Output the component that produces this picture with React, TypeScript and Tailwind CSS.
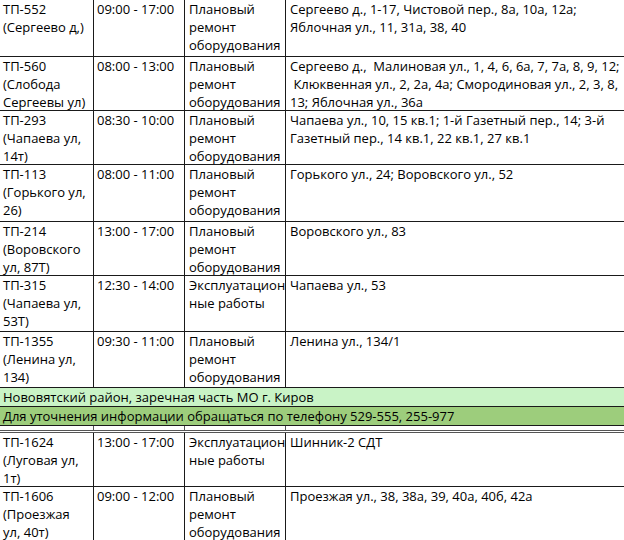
import React from 'react';

type Row = {
  tp: string[];
  time: string;
  work: string[];
  addr: string[];
  h: string;
};

const planned = ['Плановый', 'ремонт', 'оборудования'];
const exploit = ['Эксплуатацион', 'ные работы'];

const topRows: Row[] = [
  {
    tp: ['ТП-552', '(Сергеево д,)'],
    time: '09:00 - 17:00',
    work: planned,
    addr: ['Сергеево д., 1-17, Чистовой пер., 8а, 10а, 12а;', 'Яблочная ул., 11, 31а, 38, 40'],
    h: 'h-[57px]',
  },
  {
    tp: ['ТП-560', '(Слобода', 'Сергеевы ул)'],
    time: '08:00 - 13:00',
    work: planned,
    addr: [
      'Сергеево д.,  Малиновая ул., 1, 4, 6, 6а, 7, 7а, 8, 9, 12;',
      ' Клюквенная ул., 2, 2а, 4а; Смородиновая ул., 2, 3, 8,',
      '13; Яблочная ул., 36а',
    ],
    h: 'h-[54px]',
  },
  {
    tp: ['ТП-293', '(Чапаева ул,', '14т)'],
    time: '08:30 - 10:00',
    work: planned,
    addr: ['Чапаева ул., 10, 15 кв.1; 1-й Газетный пер., 14; 3-й', 'Газетный пер., 14 кв.1, 22 кв.1, 27 кв.1'],
    h: 'h-[54px]',
  },
  {
    tp: ['ТП-113', '(Горького ул,', '26)'],
    time: '08:00 - 11:00',
    work: planned,
    addr: ['Горького ул., 24; Воровского ул., 52'],
    h: 'h-[57px]',
  },
  {
    tp: ['ТП-214', '(Воровского', 'ул, 87Т)'],
    time: '13:00 - 17:00',
    work: planned,
    addr: ['Воровского ул., 83'],
    h: 'h-[54px]',
  },
  {
    tp: ['ТП-315', '(Чапаева ул,', '53Т)'],
    time: '12:30 - 14:00',
    work: exploit,
    addr: ['Чапаева ул., 53'],
    h: 'h-[56px]',
  },
  {
    tp: ['ТП-1355', '(Ленина ул,', '134)'],
    time: '09:30 - 11:00',
    work: planned,
    addr: ['Ленина ул., 134/1'],
    h: 'h-[56px]',
  },
];

const bottomRows: Row[] = [
  {
    tp: ['ТП-1624', '(Луговая ул,', '1т)'],
    time: '13:00 - 17:00',
    work: exploit,
    addr: ['Шинник-2 СДТ'],
    h: 'h-[54px]',
  },
  {
    tp: ['ТП-1606', '(Проезжая', 'ул, 40т)'],
    time: '09:00 - 12:00',
    work: planned,
    addr: ['Проезжая ул., 38, 38а, 39, 40а, 40б, 42а'],
    h: 'h-[54px]',
  },
];

const cols = 'grid grid-cols-[94px_91px_101px_1fr]';

const Lines = ({ items }: { items: string[] }) => (
  <>
    {items.map((t, i) => (
      <div key={i} className="whitespace-pre">
        {t}
      </div>
    ))}
  </>
);

const DataRow = ({ row, first }: { row: Row; first?: boolean }) => (
  <div className={`${cols} ${row.h} border-b border-[#1a1a1a] ${first ? '-mt-[2px] pt-[2px]' : ''}`}>
    <div className="border-r border-[#1a1a1a] pl-[3px]">
      <Lines items={row.tp} />
    </div>
    <div className="border-r border-[#1a1a1a] pl-[3px]">{row.time}</div>
    <div className="border-r border-[#1a1a1a] pl-[4px]">
      <Lines items={row.work} />
    </div>
    <div className="pl-[4px]">
      <Lines items={row.addr} />
    </div>
  </div>
);

export default function App() {
  return (
    <div
      className="w-[624px] h-[540px] overflow-hidden bg-white text-black text-[13px] leading-[18px]"
      style={{ fontFamily: '"Open Sans", "Noto Sans", sans-serif' }}
    >
      {topRows.map((r) => (
        <DataRow key={r.tp[0]} row={r} />
      ))}

      <div className="h-[19px] bg-[#c9f3c6] border-b border-[#1a1a1a] pl-[3px] whitespace-nowrap">
        Нововятский район, заречная часть МО г. Киров
      </div>
      <div className="h-[19px] bg-[#9dcd7c] border-b border-[#1a1a1a] pl-[3px] whitespace-nowrap">
        Для уточнения информации обращаться по телефону 529-555, 255-977
      </div>

      <div className={`${cols} h-[7px] border-b-[3px] border-double border-[#555]`}>
        <div className="border-r border-[#555]" />
        <div className="border-r border-[#555]" />
        <div className="border-r border-[#555]" />
        <div />
      </div>

      {bottomRows.map((r) => (
        <DataRow key={r.tp[0]} row={r} />
      ))}
    </div>
  );
}
